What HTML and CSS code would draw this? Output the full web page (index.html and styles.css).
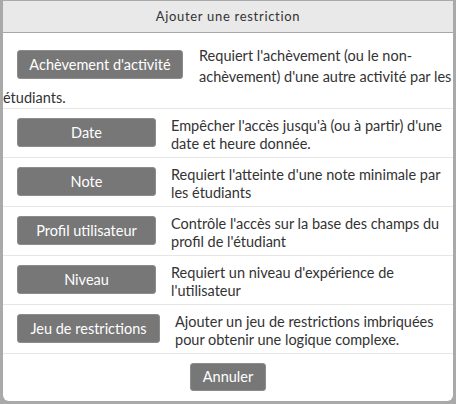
FILE: index.html
```html
<!DOCTYPE html>
<html lang="fr">
<head>
<meta charset="utf-8">
<title>Ajouter une restriction</title>
<link rel="stylesheet" href="styles.css">
</head>
<body>
<div class="dialog">
  <div class="dialog-header">Ajouter une restriction</div>
  <div class="dialog-body">
    <div class="option option-flow">
      <button class="btn btn-float btn-completion">Achèvement d'activité</button>
      Requiert l'achèvement (ou le non-achèvement) d'une autre activité par les étudiants.
    </div>
    <div class="option">
      <button class="btn">Date</button>
      <div class="desc">Empêcher l'accès jusqu'à (ou à partir) d'une date et heure donnée.</div>
    </div>
    <div class="option">
      <button class="btn">Note</button>
      <div class="desc">Requiert l'atteinte d'une note minimale par les étudiants</div>
    </div>
    <div class="option">
      <button class="btn">Profil utilisateur</button>
      <div class="desc">Contrôle l'accès sur la base des champs du profil de l'étudiant</div>
    </div>
    <div class="option">
      <button class="btn">Niveau</button>
      <div class="desc">Requiert un niveau d'expérience de l'utilisateur</div>
    </div>
    <div class="option">
      <button class="btn btn-set">Jeu de restrictions</button>
      <div class="desc">Ajouter un jeu de restrictions imbriquées pour obtenir une logique complexe.</div>
    </div>
  </div>
  <div class="dialog-footer">
    <button class="btn btn-cancel">Annuler</button>
  </div>
</div>
</body>
</html>
```
FILE: styles.css
```css
* { box-sizing: border-box; }

html, body {
  margin: 0;
  height: 100%;
}

body {
  background: #a9a9a9;
  padding: 1px 3px 0 3px;
  font-family: Lato, "Liberation Sans", sans-serif;
  color: #333;
}

.dialog {
  width: 450px;
  height: 400px;
  background: #fff;
  border-radius: 0 0 6px 6px;
  overflow: hidden;
  display: flex;
  flex-direction: column;
}

.dialog-header {
  height: 32px;
  background: #e9e9e9;
  border-bottom: 1px solid #a8a8a8;
  text-align: center;
  line-height: 31px;
  font-size: 13px;
  letter-spacing: 0.7px;
  color: #333;
}

.option {
  display: flex;
  align-items: flex-start;
  height: 49px;
  border-bottom: 1px solid #e6e6e6;
  font-size: 14.5px;
  line-height: 18px;
}

.option-flow {
  display: block;
  height: 76px;
  padding-top: 12px;
  line-height: 21px;
}

.btn {
  flex: none;
  width: 139px;
  height: 29px;
  margin: 9px 15px 0 14px;
  padding: 0;
  background: #777;
  border: 1px solid #8c8c8c;
  border-radius: 3px;
  color: #fff;
  font-family: inherit;
  font-size: 14.5px;
  line-height: 27px;
  text-align: center;
}

.btn-float {
  float: left;
  margin: 5px 16px 0 14px;
}

.btn-completion { width: 166px; }
.btn-set { width: 143px; }

.desc {
  margin-top: 8px;
}

.dialog-footer {
  padding-top: 9px;
  text-align: center;
}

.btn-cancel {
  width: 76px;
  height: 28px;
  margin: 0;
  line-height: 26px;
}
```
